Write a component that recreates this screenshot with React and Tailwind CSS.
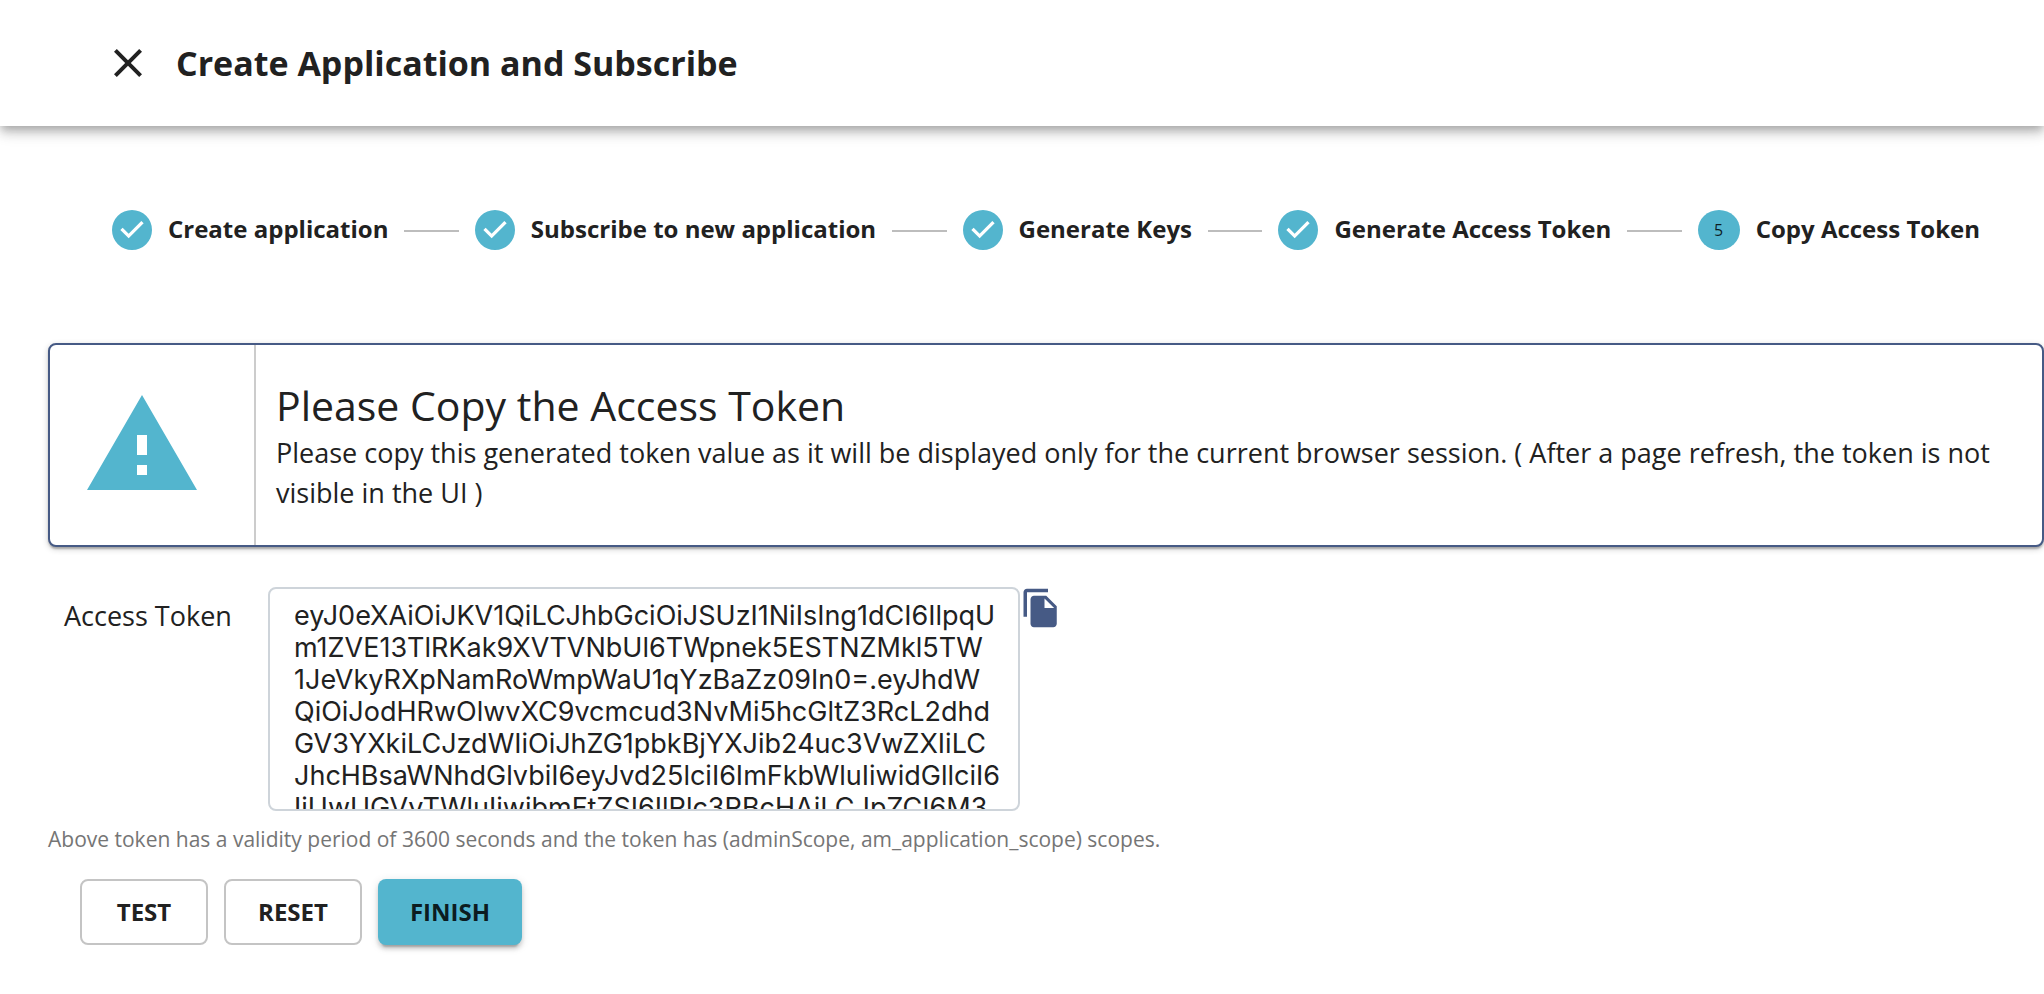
import React, { Fragment } from 'react';

const STEPS = [
  'Create application',
  'Subscribe to new application',
  'Generate Keys',
  'Generate Access Token',
  'Copy Access Token',
];
const ACTIVE_STEP = 4;

const TOKEN = [
  'eyJ0eXAiOiJKV1QiLCJhbGciOiJSUzI1NiIsIng1dCI6IlpqU',
  'm1ZVE13TlRKak9XVTVNbUl6TWpnek5ESTNZMkl5TW',
  '1JeVkyRXpNamRoWmpWaU1qYzBaZz09In0=.eyJhdW',
  'QiOiJodHRwOlwvXC9vcmcud3NvMi5hcGltZ3RcL2dhd',
  'GV3YXkiLCJzdWIiOiJhZG1pbkBjYXJib24uc3VwZXIiLC',
  'JhcHBsaWNhdGlvbiI6eyJvd25lciI6ImFkbWluIiwidGllciI6',
  'IjUwUGVyTWluIiwibmFtZSI6IlRlc3RBcHAiLCJpZCI6M3',
].join('\n');

function Header() {
  return (
    <header className="relative flex h-[126px] items-center bg-white pl-[104px] shadow-[0_4px_8px_-2px_rgba(0,0,0,0.2),0_8px_10px_rgba(0,0,0,0.14),0_2px_20px_rgba(0,0,0,0.12)]">
      <button type="button" aria-label="Close" className="flex">
        <svg viewBox="0 0 24 24" className="size-12 fill-current" aria-hidden="true">
          <path d="M19 6.41L17.59 5 12 10.59 6.41 5 5 6.41 10.59 12 5 17.59 6.41 19 12 13.41 17.59 19 19 17.59 13.41 12z" />
        </svg>
      </button>
      <h1 className="ml-6 text-[34px] leading-[50px] font-bold">Create Application and Subscribe</h1>
    </header>
  );
}

function StepIcon({ index }) {
  if (index < ACTIVE_STEP) {
    return (
      <svg viewBox="0 0 24 24" className="size-10 shrink-0 fill-[#53b5ce]" aria-hidden="true">
        <path d="M12 0a12 12 0 1 0 0 24 12 12 0 0 0 0-24zm-2 17l-5-5 1.4-1.4 3.6 3.6 7.6-7.6L19 8l-9 9z" />
      </svg>
    );
  }
  return (
    <span className="flex h-10 w-[42px] shrink-0 items-center justify-center rounded-[50%] bg-[#53b5ce] text-base text-black/85">
      {index + 1}
    </span>
  );
}

function Stepper() {
  return (
    <ol className="flex items-center gap-4 pt-[84px] pr-16 pl-28">
      {STEPS.map((label, index) => (
        <Fragment key={label}>
          {index > 0 && <li aria-hidden="true" className="mt-[2px] h-[2px] flex-1 bg-[#bdbdbd]" />}
          <li className="flex items-center gap-4" aria-current={index === ACTIVE_STEP ? 'step' : undefined}>
            <StepIcon index={index} />
            <span className="pb-[2px] text-2xl font-bold whitespace-nowrap">{label}</span>
          </li>
        </Fragment>
      ))}
    </ol>
  );
}

function Notice() {
  return (
    <section className="mt-[93px] flex rounded-lg border-2 border-[#465a85] bg-white shadow-[0_2px_6px_rgba(0,0,0,0.2),0_2px_2px_rgba(0,0,0,0.14),0_4px_2px_-2px_rgba(0,0,0,0.12)]">
      <div className="flex shrink-0 items-center border-r-2 border-[#cccccc] pr-[52px] pl-8">
        <svg viewBox="0 0 24 24" className="size-[120px] fill-[#53b5ce]" aria-hidden="true">
          <path d="M1 21h22L12 2 1 21zm12-3h-2v-2h2v2zm0-4h-2v-4h2v4z" />
        </svg>
      </div>
      <div className="px-5 py-8">
        <h2 className="text-[41px] leading-[56px]">Please Copy the Access Token</h2>
        <p className="text-[27px] leading-10">
          Please copy this generated token value as it will be displayed only for the current browser session. ( After
          a page refresh, the token is not visible in the UI )
        </p>
      </div>
    </section>
  );
}

function TokenField() {
  return (
    <div className="mt-10 flex items-start">
      <label htmlFor="access-token" className="w-[220px] pt-2 pl-4 text-[27px] leading-[42px]">
        Access Token
      </label>
      <textarea
        id="access-token"
        readOnly
        wrap="off"
        defaultValue={TOKEN}
        className="block h-56 w-[752px] resize-none overflow-hidden rounded-lg border-2 border-[#ced4da] bg-white px-6 py-[11px] font-[Inter,sans-serif] text-[27px] leading-8 outline-none"
      />
      <button type="button" aria-label="Copy to clipboard" className="flex text-[#465a85]">
        <svg viewBox="0 0 24 24" className="size-[42px] fill-current" aria-hidden="true">
          <path d="M16 1H4c-1.1 0-2 .9-2 2v14h2V3h12V1zm-1 4l6 6v10c0 1.1-.9 2-2 2H7.99C6.89 23 6 22.1 6 21l.01-14c0-1.1.89-2 1.99-2h7zm-1 7h5.5L14 6.5V12z" />
        </svg>
      </button>
    </div>
  );
}

function Actions() {
  return (
    <div className="mt-6 flex gap-4 pl-8">
      <button type="button" className="h-[66px] w-32 rounded-lg border-2 border-[#c4c4c4] text-2xl font-bold">
        TEST
      </button>
      <button type="button" className="h-[66px] w-[138px] rounded-lg border-2 border-[#c4c4c4] text-2xl font-bold">
        RESET
      </button>
      <button
        type="button"
        className="h-[66px] w-36 rounded-lg bg-[#53b5ce] text-2xl font-bold text-black/85 shadow-[0_6px_2px_-4px_rgba(0,0,0,0.2),0_4px_4px_rgba(0,0,0,0.14),0_2px_10px_rgba(0,0,0,0.12)]"
      >
        FINISH
      </button>
    </div>
  );
}

export default function App() {
  return (
    <div className="min-h-screen bg-white font-['Open_Sans',sans-serif] text-[#212121]">
      <Header />
      <Stepper />
      <main className="pb-12 pl-12">
        <Notice />
        <TokenField />
        <p className="mt-3 text-[21px] leading-8 text-[#757575]">
          Above token has a validity period of 3600 seconds and the token has (adminScope, am_application_scope)
          scopes.
        </p>
        <Actions />
      </main>
    </div>
  );
}
